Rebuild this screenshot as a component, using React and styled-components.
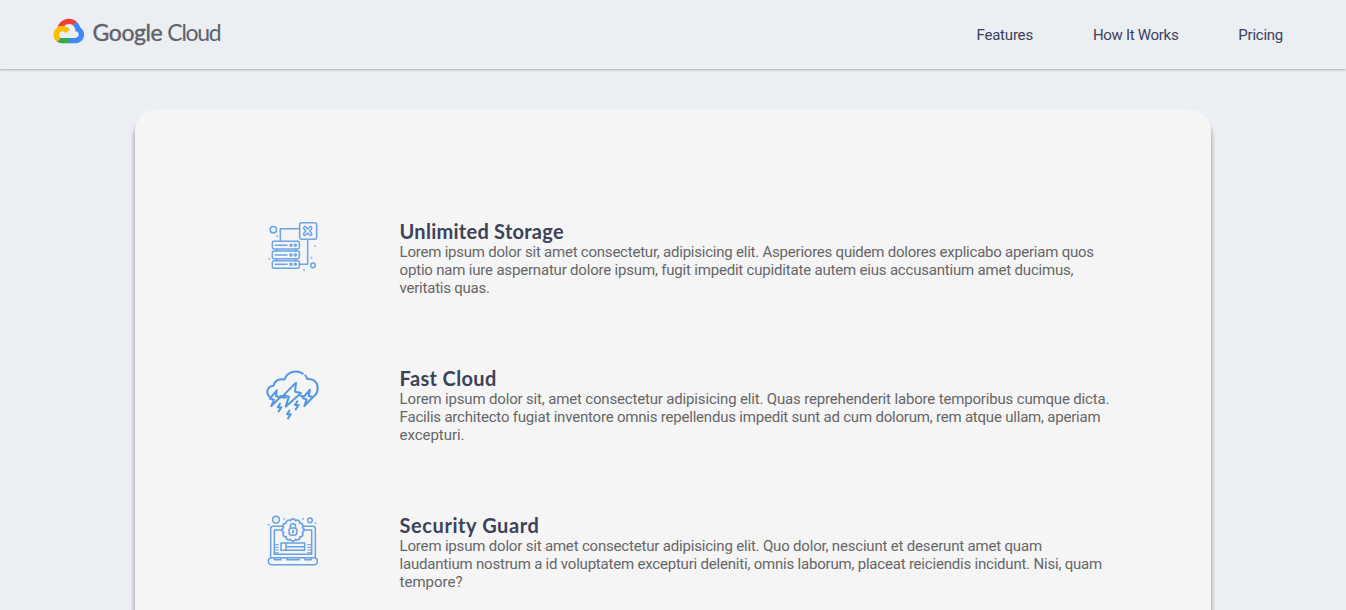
import React from "react";
import styled, { createGlobalStyle } from "styled-components";

const GlobalStyle = createGlobalStyle`
  * { box-sizing: border-box; margin: 0; padding: 0; }
  html, body { height: 100%; overflow: hidden; }
  body {
    background: #ebeef3;
    font-family: Roboto, "Liberation Sans", sans-serif;
    color: #3c4257;
  }
`;

const Page = styled.div`
  height: 100vh;
  overflow: hidden;
`;

const Header = styled.header`
  display: flex;
  align-items: center;
  justify-content: space-between;
  height: 69px;
  padding: 0 63px 0 52px;
  box-shadow: 0 1px 2px rgba(0, 0, 0, 0.28);
`;

const Logo = styled.a`
  display: flex;
  align-items: center;
  margin-top: -6px;
  color: #5f6368;
`;

const LogoMark = styled.svg`
  display: block;
  width: 33.5px;
  height: 33.5px;
`;

const Wordmark = styled.span`
  display: flex;
  gap: 5px;
  margin-left: 7px;
  font: 400 23px/26px Lato, sans-serif;
`;

const Word = styled.span`
  letter-spacing: ${(p) => p.$tracking}px;
  -webkit-text-stroke: ${(p) => (p.$bold ? "0.4px #5f6368" : "0")};
`;

const Nav = styled.nav`
  display: flex;
  gap: 60px;
`;

const NavLink = styled.a`
  font-size: 15px;
  line-height: 18px;
  white-space: nowrap;
  letter-spacing: ${(p) => p.$tracking}px;
`;

const Card = styled.main`
  width: 80%;
  height: 700px;
  margin: 41px auto 0;
  padding: 100px 0 0 120px;
  border-radius: 20px;
  background: #f5f5f5;
  box-shadow: 0 7px 5px rgba(0, 0, 0, 0.44);
`;

const Feature = styled.section`
  display: flex;
  height: 147px;
`;

const FeatureIcon = styled.svg`
  flex: none;
  width: 76px;
  height: 70px;
  fill: none;
  stroke: #5596e2;
  stroke-linecap: round;
  stroke-linejoin: round;
`;

const Copy = styled.div`
  margin-left: 69px;
  padding-top: 9px;
`;

const Title = styled.h2`
  font-family: Lato, sans-serif;
  font-size: 20px;
  line-height: 24px;
  font-weight: 700;
  white-space: nowrap;
  letter-spacing: ${(p) => p.$tracking}px;
`;

const Line = styled.span`
  display: block;
  font-size: 15px;
  line-height: 18px;
  color: #666;
  white-space: nowrap;
  letter-spacing: ${(p) => p.$tracking}px;
`;

const StorageIcon = () => (
  <FeatureIcon viewBox="0 0 228 210" strokeWidth="4.5" opacity="0.85">
    <rect x="134" y="38" width="51" height="50" rx="6" />
    <path d="M133 56H76V94M158 89V163H134" />
    <rect x="52" y="94" width="81" height="23" rx="5" />
    <rect x="52" y="123" width="81" height="23" rx="5" />
    <rect x="52" y="152" width="81" height="23" rx="5" />
    <path d="M61 106H96M61 135H96M61 163H96M65 117V123M122 117V123M65 146V152M122 146V152" />
    {[106, 135, 163].map((y) => (
      <React.Fragment key={y}>
        <circle cx="108" cy={y} r="3" />
        <circle cx="121" cy={y} r="3" />
      </React.Fragment>
    ))}
    <path d="M147 51q3-3 6 1l5 5 5-5q3-4 6-1t0 6l-5 6 5 6q3 3 0 6t-6-1l-5-5-5 5q-3 4-6 1t0-6l5-6-5-6q-3-3 0-6z" />
    <circle cx="55" cy="59" r="9.5" />
    <circle cx="174" cy="166" r="7" />
    <g fill="#78aee9" stroke="none">
      <circle cx="67" cy="78" r="3" /><circle cx="43" cy="146" r="3" />
      <circle cx="180" cy="108" r="3" /><circle cx="169" cy="143" r="3" />
      <circle cx="147" cy="179" r="3" />
    </g>
  </FeatureIcon>
);

const StormIcon = () => (
  <FeatureIcon viewBox="0 -9 228 210" strokeWidth="6">
    <path d="M45 112C30 97 38 78 56 77C58 63 72 55 88 59C97 34 125 29 143 41M151 46Q155 50 157 57C178 55 190 70 188 88Q186 102 177 109" />
    <path d="M123 68L85 106L102 110L92 140L138 99L120 95Z" />
    <path d="M65 91L45 116L57 119L49 138L76 112L63 109Z" />
    <path d="M165 89L143 114L155 118L148 138L174 111L161 108Z" />
    <path d="M77 108L86 110M137 108L145 109M80 112L92 113" />
    <g strokeWidth="6">
      <path d="M75 131L68 142L79 142L71 154M127 124L120 135L131 135L122 148M103 152L96 163L107 163L99 175" />
    </g>
  </FeatureIcon>
);

const LOBES = 12;
const badgePath =
  Array.from({ length: LOBES + 1 }, (_, i) => {
    const angle = ((i - 0.5) * 2 * Math.PI) / LOBES;
    const x = (114 + 29 * Math.sin(angle)).toFixed(1);
    const y = (75 - 29 * Math.cos(angle)).toFixed(1);
    return i === 0 ? `M${x} ${y}` : `A8 8 0 0 1 ${x} ${y}`;
  }).join("") + "Z";

const GuardIcon = () => (
  <FeatureIcon viewBox="0 -3 228 210" strokeWidth="4.5" opacity="0.88">
    <path d="M83 64H54Q47 64 47 71V155M145 64H173Q181 64 181 71V155" />
    <path d="M83 75H58V148M145 75H170V148M58 148H170" />
    <rect x="40" y="158" width="147" height="21" rx="10" />
    <path d="M58 158V164H77V158M96 158V164H132V158M150 158V164H169V158" />
    <path d="M60 119H70M60 127H70M60 135H70M60 143H70M158 119H168M158 127H168M158 135H168M158 143H168" strokeWidth="3" />
    <path d="M78 114H149V136H78ZM93 114V136M93 125H149" />
    <path d={badgePath} strokeWidth="5" />
    <path d="M106 68V64Q106 56 114 56Q122 56 122 64V68" />
    <rect x="102" y="69" width="24" height="22" rx="9" />
    <path d="M114 77V83" strokeWidth="5" />
    <circle cx="63" cy="44" r="10" />
    <circle cx="165" cy="46" r="7" />
    <g fill="#78aee9" stroke="none">
      <circle cx="88" cy="41" r="3" /><circle cx="144" cy="41" r="3" />
      <circle cx="41" cy="59" r="3" /><circle cx="182" cy="55" r="3" />
    </g>
  </FeatureIcon>
);

const features = [
  {
    icon: StorageIcon,
    title: ["Unlimited Storage", 0.26],
    lines: [
      ["Lorem ipsum dolor sit amet consectetur, adipisicing elit. Asperiores quidem dolores explicabo aperiam quos", -0.224],
      ["optio nam iure aspernatur dolore ipsum, fugit impedit cupiditate autem eius accusantium amet ducimus,", -0.19],
      ["veritatis quas.", -0.23],
    ],
  },
  {
    icon: StormIcon,
    title: ["Fast Cloud", 0.36],
    lines: [
      ["Lorem ipsum dolor sit, amet consectetur adipisicing elit. Quas reprehenderit labore temporibus cumque dicta.", -0.165],
      ["Facilis architecto fugiat inventore omnis repellendus impedit sunt ad cum dolorum, rem atque ullam, aperiam", -0.205],
      ["excepturi.", -0.05],
    ],
  },
  {
    icon: GuardIcon,
    title: ["Security Guard", 0.57],
    lines: [
      ["Lorem ipsum dolor sit amet consectetur adipisicing elit. Quo dolor, nesciunt et deserunt amet quam", -0.185],
      ["laudantium nostrum a id voluptatem excepturi deleniti, omnis laborum, placeat reiciendis incidunt. Nisi, quam", -0.203],
      ["tempore?", 0],
    ],
  },
];

export default function App() {
  return (
    <Page>
      <GlobalStyle />
      <Header>
        <Logo>
          <LogoMark viewBox="0 0 128 128">
            <path fill="#ea4335" d="M80.6 40.3h.4l-.2-.2 14-14v-.3c-11.8-10.4-28.1-14-43.2-9.5C36.5 20.8 24.9 32.8 20.7 48c.2-.1.5-.2.8-.2 5.2-3.4 11.4-5.4 17.9-5.4 2.2 0 4.3.2 6.4.6.1-.1.2-.1.3-.1 9-9.9 24.2-11.1 34.6-2.6h-.1z" />
            <path fill="#4285f4" d="M108.1 47.8c-2.3-8.5-7.1-16.2-13.8-22.1L80 39.9c6 4.9 9.5 12.3 9.3 20v2.5c16.9 0 16.9 25.2 0 25.2H63.9v20h-.1l.1.2h25.4c14.6.1 27.5-9.3 31.8-23.1 4.3-13.8-1-28.8-13-36.9z" />
            <path fill="#34a853" d="M39 107.9h26.3V87.7H39c-1.9 0-3.7-.4-5.4-1.1l-15.2 14.6v.2c6 4.3 13.2 6.6 20.6 6.5z" />
            <path fill="#fbbc05" d="M40.2 41.9c-14.9.1-28.1 9.3-32.9 22.8-4.8 13.6 0 28.5 11.8 37.3l15.6-14.9c-8.6-3.7-10.6-14.5-4-20.8 6.6-6.4 17.8-4.4 21.7 3.8L68 55.2C61.4 46.9 51.1 42 40.2 41.9z" />
          </LogoMark>
          <Wordmark>
            <Word $bold $tracking={-0.4}>Google</Word>
            <Word $tracking={-1.3}>Cloud</Word>
          </Wordmark>
        </Logo>
        <Nav>
          <NavLink $tracking={-0.2}>Features</NavLink>
          <NavLink $tracking={-0.3}>How It Works</NavLink>
          <NavLink $tracking={-0.25}>Pricing</NavLink>
        </Nav>
      </Header>
      <Card>
        {features.map(({ icon: Icon, title, lines }) => (
          <Feature key={title[0]}>
            <Icon />
            <Copy>
              <Title $tracking={title[1]}>{title[0]}</Title>
              <p>
                {lines.map(([text, tracking]) => (
                  <Line key={text} $tracking={tracking}>{text}</Line>
                ))}
              </p>
            </Copy>
          </Feature>
        ))}
      </Card>
    </Page>
  );
}
